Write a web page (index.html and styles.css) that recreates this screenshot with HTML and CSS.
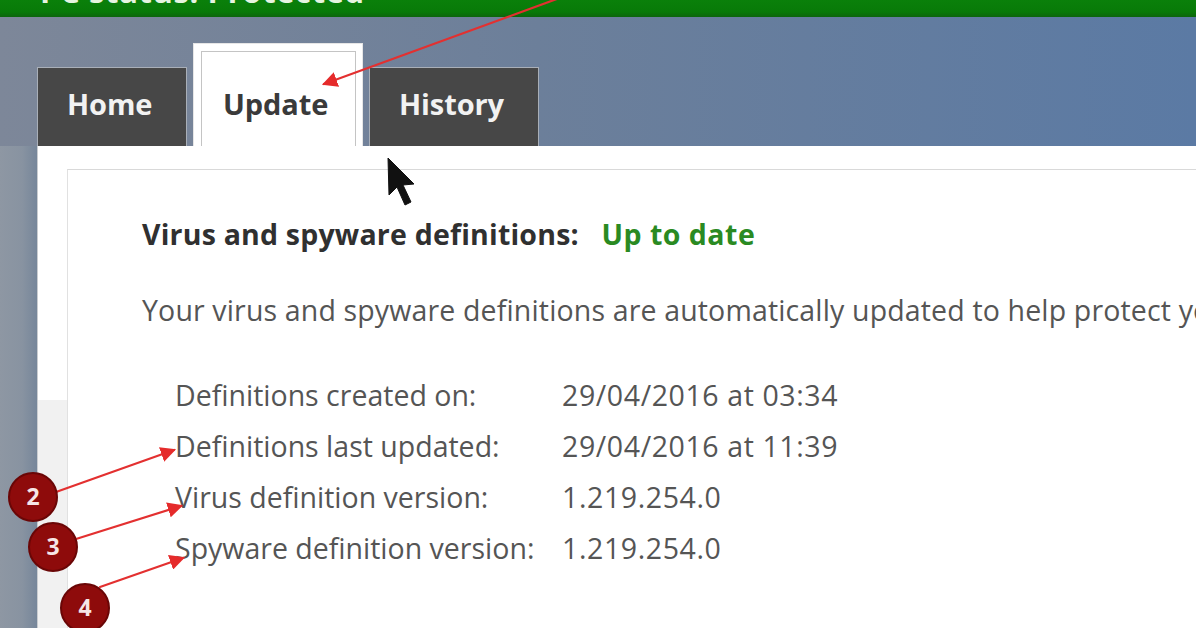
FILE: index.html
```html
<!DOCTYPE html>
<html lang="en">
<head>
<meta charset="utf-8">
<title>Windows Defender - Update</title>
<link rel="stylesheet" href="styles.css">
</head>
<body>
<div class="page">
  <header class="statusbar"><span class="status-title">PC status: Protected</span></header>
  <nav class="tabbar">
    <div class="tab tab-home">Home</div>
    <div class="tab tab-update active">Update</div>
    <div class="tab tab-history">History</div>
  </nav>
  <main class="main">
    <div class="sidebar"></div>
    <section class="panel">
      <div class="card">
        <h2 class="heading">Virus and spyware definitions: <span class="ok">Up to date</span></h2>
        <p class="intro">Your virus and spyware definitions are automatically updated to help protect your PC.</p>
        <div class="defs">
          <div class="row"><span class="label">Definitions created on:</span><span class="value">29/04/2016 at 03:34</span></div>
          <div class="row"><span class="label">Definitions last updated:</span><span class="value">29/04/2016 at 11:39</span></div>
          <div class="row"><span class="label">Virus definition version:</span><span class="value">1.219.254.0</span></div>
          <div class="row"><span class="label">Spyware definition version:</span><span class="value">1.219.254.0</span></div>
        </div>
      </div>
    </section>
  </main>
  <svg class="annotations" width="1196" height="628" viewBox="0 0 1196 628" aria-hidden="true">
    <defs>
      <marker id="head" markerWidth="7" markerHeight="7" refX="6" refY="3.5" orient="auto" markerUnits="strokeWidth">
        <path d="M0,0 L7,3.5 L0,7 Z" fill="#e52b2b"/>
      </marker>
    </defs>
    <g stroke="#e33030" stroke-width="2.2" fill="none" stroke-linecap="round">
      <line x1="565" y1="-4" x2="324" y2="84" marker-end="url(#head)"/>
      <line x1="56" y1="492" x2="174" y2="450" marker-end="url(#head)"/>
      <line x1="76" y1="539" x2="181" y2="506" marker-end="url(#head)"/>
      <line x1="100" y1="587" x2="183" y2="558" marker-end="url(#head)"/>
    </g>
    <g class="badge">
      <circle cx="33" cy="497" r="24" fill="#8e0b0b" stroke="#6a0606" stroke-width="2"/>
      <text x="33" y="505" text-anchor="middle">2</text>
      <circle cx="53" cy="547" r="24" fill="#8e0b0b" stroke="#6a0606" stroke-width="2"/>
      <text x="53" y="555" text-anchor="middle">3</text>
      <circle cx="85" cy="608" r="24" fill="#8e0b0b" stroke="#6a0606" stroke-width="2"/>
      <text x="85" y="616" text-anchor="middle">4</text>
    </g>
    <path d="M388 158 L389 195 L397 187 L405 205 L411 202 L403 185 L414 184 Z" fill="#111" stroke="#111" stroke-width="1" stroke-linejoin="round"/>
  </svg>
</div>
</body>
</html>
```
FILE: styles.css
```css
* { box-sizing: border-box; }
html, body { margin: 0; padding: 0; }
body {
  width: 1196px;
  height: 628px;
  overflow: hidden;
  font-family: "Open Sans", "Noto Sans", "Liberation Sans", sans-serif;
  background: #ffffff;
}
.page {
  position: relative;
  width: 1196px;
  height: 628px;
  overflow: hidden;
  display: flex;
  flex-direction: column;
}
.statusbar {
  height: 17px;
  flex: 0 0 17px;
  background: linear-gradient(#0a800a, #087a08 70%, #0c650c);
  overflow: hidden;
  padding-left: 40px;
}
.status-title {
  display: block;
  margin-top: -27px;
  font-size: 31px;
  line-height: 36px;
  font-weight: 700;
  color: #e6f4e0;
  letter-spacing: 0.6px;
}
.tabbar {
  flex: 0 0 129px;
  height: 129px;
  display: flex;
  align-items: flex-end;
  gap: 6px;
  padding-left: 37px;
  background: linear-gradient(90deg, #7d8799 0%, #6c7f9a 45%, #5b7aa4 100%);
}
.tab {
  position: relative;
  height: 79px;
  padding: 18px 0 0 29px;
  font-size: 29px;
  line-height: 36px;
  font-weight: 700;
  color: #f2f2f2;
  background: #474747;
  border: 1px solid #a9afb8;
  border-bottom: 0;
  letter-spacing: -0.1px;
}
.tab-home { width: 150px; }
.tab-history { width: 170px; }
.tab.active {
  width: 170px;
  height: 103px;
  padding-top: 42px;
  background: #ffffff;
  color: #3a3a3a;
  border: 1px solid #e6e6e6;
  border-bottom: 0;
}
.tab.active::before {
  content: "";
  position: absolute;
  left: 7px;
  right: 6px;
  top: 7px;
  bottom: 0;
  border: 1px solid #c4c4c4;
  border-bottom: 0;
}
.main {
  flex: 1;
  display: flex;
  min-height: 0;
}
.sidebar {
  flex: 0 0 37px;
  background: linear-gradient(90deg, #8e97a3 0%, #8893a1 60%, #76869a 100%);
}
.panel {
  flex: 1;
  background: linear-gradient(90deg, #f1f1f1 0, #f1f1f1 29px, #ffffff 29px);
  border-left: 1px solid #c9ccd0;
  overflow: hidden;
  padding: 23px 0 0 29px;
  position: relative;
}
.panel::before {
  content: "";
  position: absolute;
  left: 0;
  top: 0;
  width: 29px;
  height: 254px;
  background: #ffffff;
}
.card {
  height: 100%;
  background: #ffffff;
  border-top: 1px solid #d9d9d9;
  border-left: 1px solid #e1e1e1;
  padding: 46px 0 0 74px;
  white-space: nowrap;
}
.heading {
  margin: 0;
  font-size: 28.5px;
  line-height: 36px;
  font-weight: 700;
  color: #303030;
  letter-spacing: 0.2px;
}
.ok {
  color: #2a8a22;
  margin-left: 15px;
  letter-spacing: 0.5px;
}
.intro {
  margin: 40px 0 0;
  font-size: 28.5px;
  line-height: 36px;
  color: #555555;
  letter-spacing: 0.15px;
}
.defs {
  margin-top: 42px;
  padding-left: 33px;
}
.row {
  display: flex;
  height: 51px;
  line-height: 51px;
  font-size: 28.5px;
  color: #555555;
  letter-spacing: 0;
}
.label { flex: 0 0 387px; }
.value { letter-spacing: 0.6px; }
.annotations {
  position: absolute;
  left: 0;
  top: 0;
  pointer-events: none;
}
.badge text {
  font-family: "Open Sans", "Liberation Sans", sans-serif;
  font-size: 23px;
  font-weight: 700;
  fill: #f6e6e6;
}
```
